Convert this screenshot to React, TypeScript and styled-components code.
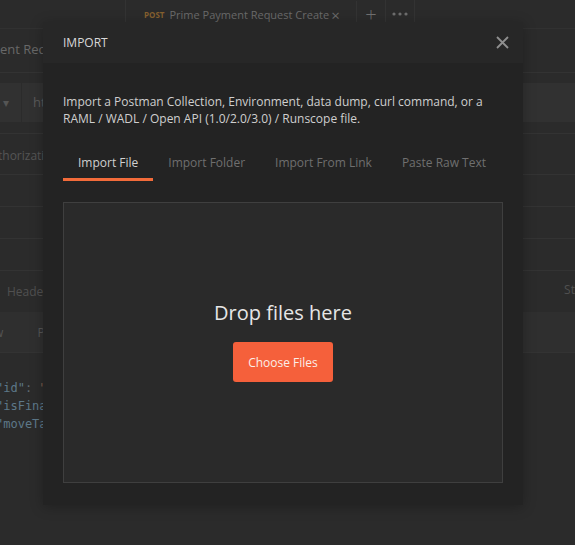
import styled, { createGlobalStyle } from 'styled-components'
import { FC } from 'react'

const GlobalStyle = createGlobalStyle`
  html, body {
    margin: 0;
    padding: 0;
    background: #2b2b2b;
    font-family: 'Open Sans', 'DejaVu Sans', sans-serif;
    overflow: hidden;
  }
  #root {
    width: 575px;
    height: 545px;
  }
`

const tabs = ['Import File', 'Import Folder', 'Import From Link', 'Paste Raw Text']

const CloseIcon: FC = () => (
  <svg width="13" height="13" viewBox="0 0 13 13">
    <path d="M1 1 L12 12 M12 1 L1 12" stroke="#8f8f8f" strokeWidth="1.8" />
  </svg>
)

const DotsIcon: FC = () => (
  <svg width="16" height="4" viewBox="0 0 16 4">
    <circle cx="2" cy="2" r="1.6" fill="#6e6e6e" />
    <circle cx="8" cy="2" r="1.6" fill="#6e6e6e" />
    <circle cx="14" cy="2" r="1.6" fill="#6e6e6e" />
  </svg>
)

export default function App() {
  return (
    <Page>
      <GlobalStyle />
      <TabBar>
        <TabStub />
        <RequestTab>
          <Method>POST</Method>
          <TabTitle>Prime Payment Request Create</TabTitle>
          <TabClose>×</TabClose>
        </RequestTab>
        <BarButton>+</BarButton>
        <BarButton>
          <DotsIcon />
        </BarButton>
      </TabBar>
      <TitleRow>ent Request Create</TitleRow>
      <UrlRow>
        <MethodSelect>▾</MethodSelect>
        <UrlInput>https://</UrlInput>
      </UrlRow>
      <SubTabs>thorization</SubTabs>
      <EmptyRow />
      <EmptyRow />
      <EmptyRow />
      <ResponseTabs>
        <span>Headers</span>
        <Status>Status</Status>
      </ResponseTabs>
      <ViewBar>
        <span>Raw</span>
        <span>Preview</span>
      </ViewBar>
      <Code>
        <CodeLine>
          <Key>"id"</Key>: <Str>"</Str>
        </CodeLine>
        <CodeLine>
          <Key>"isFinal"</Key>
        </CodeLine>
        <CodeLine>
          <Key>"moveTask"</Key>
        </CodeLine>
      </Code>

      <Modal>
        <ModalHeader>
          <ModalTitle>IMPORT</ModalTitle>
          <CloseButton>
            <CloseIcon />
          </CloseButton>
        </ModalHeader>
        <ModalBody>
          <Description>
            Import a Postman Collection, Environment, data dump, curl command, or a
            <br />
            RAML / WADL / Open API (1.0/2.0/3.0) / Runscope file.
          </Description>
          <Tabs>
            {tabs.map((t, i) => (
              <Tab key={t} $active={i === 0}>
                {t}
              </Tab>
            ))}
          </Tabs>
          <DropZone>
            <DropText>Drop files here</DropText>
            <ChooseButton>Choose Files</ChooseButton>
          </DropZone>
        </ModalBody>
      </Modal>
    </Page>
  )
}

const Page = styled.div`
  position: relative;
  width: 575px;
  height: 545px;
  background: #2b2b2b;
  overflow: hidden;
  color: #5e5e5e;
  font-size: 12px;
`
const TabBar = styled.div`
  display: flex;
  height: 28px;
  border-bottom: 1px solid #313131;
`
const TabStub = styled.div`
  width: 125px;
  border-right: 1px solid #333;
`
const RequestTab = styled.div`
  display: flex;
  align-items: center;
  width: 212px;
  padding: 0 0 0 17px;
  margin-left: 1px;
  border-right: 1px solid #333;
  margin-top: 1px;
`
const Method = styled.span`
  color: #86602f;
  font-size: 8px;
  font-weight: 700;
  margin-right: 5px;
`
const TabTitle = styled.span`
  color: #6a6a6a;
  font-size: 11px;
  white-space: nowrap;
`
const TabClose = styled.span`
  color: #6a6a6a;
  font-size: 15px;
  margin-left: 2px;
`
const BarButton = styled.div`
  width: 28px;
  display: flex;
  align-items: center;
  justify-content: center;
  color: #707070;
  font-size: 20px;
  border-right: 1px solid #333;
  font-weight: 300;
`
const TitleRow = styled.div`
  height: 43px;
  line-height: 40px;
  font-size: 13px;
  color: #686868;
  border-bottom: 1px solid #333;
  white-space: nowrap;
`
const UrlRow = styled.div`
  display: flex;
  height: 39px;
  margin-top: 10px;
  background: #313131;
`
const MethodSelect = styled.div`
  width: 22px;
  border-right: 1px solid #2b2b2b;
  display: flex;
  align-items: center;
  padding-left: 3px;
  box-sizing: border-box;
  color: #555;
  font-size: 12px;
`
const UrlInput = styled.div`
  padding-left: 11px;
  line-height: 39px;
  color: #5a5a5a;
  font-size: 13px;
`
const SubTabs = styled.div`
  margin-top: 11px;
  border-top: 1px solid #333;
  height: 40px;
  line-height: 44px;
  font-size: 12px;
  color: #555;
  border-bottom: 1px solid #333;
  text-indent: -2px;
  white-space: nowrap;
`
const EmptyRow = styled.div`
  height: 31px;
  border-bottom: 1px solid #333;
`
const ResponseTabs = styled.div`
  display: flex;
  justify-content: space-between;
  height: 41px;
  align-items: center;
  padding: 0 0 0 7px;
  color: #505050;
  font-size: 12px;
  margin-right: -24px;
`
const Status = styled.span`
  margin-top: -4px;
`
const ViewBar = styled.div`
  display: flex;
  gap: 34px;
  height: 40px;
  align-items: center;
  background: #2f2f2f;
  color: #555;
  font-size: 12px;
  margin-left: -20px;
  border-bottom: 1px solid #333;
`
const Code = styled.div`
  font-family: 'DejaVu Sans Mono', monospace;
  font-size: 12px;
  line-height: 18px;
  margin-top: 26px;
  margin-left: -4px;
`
const CodeLine = styled.div`
  white-space: nowrap;
  color: #5e6a72;
`
const Key = styled.span`
  color: #5d7889;
`
const Str = styled.span`
  color: #7a5c4a;
`

const Modal = styled.div`
  position: absolute;
  left: 43px;
  top: 22px;
  width: 480px;
  height: 483px;
  background: #232323;
  box-shadow: 0 2px 12px rgba(0, 0, 0, 0.25);
  display: flex;
  flex-direction: column;
`
const ModalHeader = styled.div`
  height: 41px;
  display: flex;
  align-items: center;
  justify-content: space-between;
  padding: 0 14px 0 20px;
  background: #272727;
`
const ModalTitle = styled.div`
  color: #d8d8d8;
  font-size: 12px;
`
const CloseButton = styled.div`
  display: flex;
  padding: 0;
`
const ModalBody = styled.div`
  flex: 1;
  display: flex;
  flex-direction: column;
  padding: 30px 20px 22px;
`
const Description = styled.p`
  margin: 0;
  color: #cfcfcf;
  font-size: 12px;
  line-height: 17px;
  white-space: nowrap;
`
const Tabs = styled.div`
  display: flex;
  margin-top: 19px;
`
const Tab = styled.div<{ $active: boolean }>`
  padding: 8px 15px 7px;
  font-size: 12px;
  line-height: 17px;
  color: ${(p) => (p.$active ? '#d0d0d0' : '#6f6f6f')};
  border-bottom: 3px solid ${(p) => (p.$active ? '#f26b3a' : 'transparent')};
`
const DropZone = styled.div`
  margin-top: 21px;
  flex: 1;
  border: 1px solid #3f3f3f;
  background: #2a2a2a;
  display: flex;
  flex-direction: column;
  align-items: center;
  justify-content: center;
  gap: 15px;
  padding-bottom: 4px;
`
const DropText = styled.div`
  color: #e6e6e6;
  font-size: 20px;
  line-height: 28px;
`
const ChooseButton = styled.button`
  width: 100px;
  height: 40px;
  border: none;
  border-radius: 3px;
  background: #f5603b;
  color: #fbeee8;
  font-family: inherit;
  font-size: 12px;
  padding: 0;
`
